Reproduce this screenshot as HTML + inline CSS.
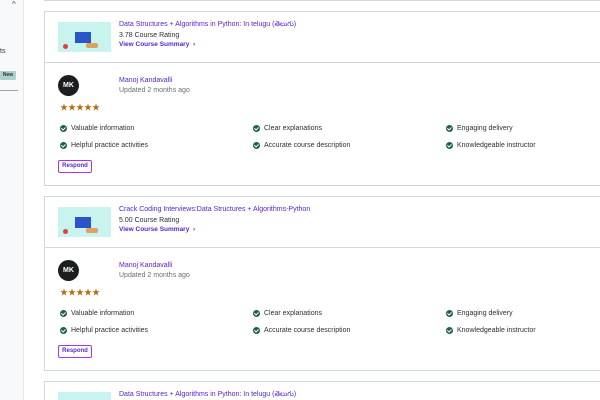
<!DOCTYPE html>
<html style="width:600px;height:400px;overflow:hidden"><head><meta charset="utf-8"><style>
html,body{margin:0;width:600px;height:400px;overflow:hidden}
body{background:#fff;font-family:"Liberation Sans","Noto Sans CJK SC",sans-serif;position:relative;color:#2d2f31}
.side{position:absolute;left:0;top:0;width:23px;height:400px;background:#f7f9fa;border-right:1px solid #e4e6e8}
.card{position:absolute;left:44px;width:570px;height:173px;border:1px solid #d1d7dc;background:#fff}
.hd{height:50px;border-bottom:1px solid #d1d7dc;position:relative}
.th{position:absolute;left:13px;top:10px;width:53px;height:30px;background:#c8f3ee}
.th i{position:absolute;left:17px;top:10px;width:16px;height:11px;background:#2a55c9}
.th b{position:absolute;left:28px;top:21px;width:12px;height:5px;background:#e0a060;border-radius:2px}
.th u{position:absolute;left:5px;top:22px;width:5px;height:5px;background:#e04040;border-radius:50%}
.t{position:absolute;left:74px;font-size:7px;white-space:nowrap}
.ab{position:absolute;font-size:7px;white-space:nowrap}
.av{position:absolute;left:13px;top:63px;width:21px;height:21px;border-radius:50%;background:#1c1d1f;color:#fff;font-size:7px;font-weight:bold;text-align:center;line-height:21px}
.ck{position:absolute;width:7px;height:7px;border-radius:50%;background:#1e6055}
.ck:after{content:"";position:absolute;left:2px;top:1px;width:1.5px;height:3px;border:solid #fff;border-width:0 1px 1px 0;transform:rotate(45deg)}
.btn{position:absolute;left:13px;top:148px;width:32px;height:11px;border:1px solid #a435f0;border-radius:2px;color:#5624d0;font-size:6px;font-weight:bold;text-align:center;line-height:11px}
.st{position:absolute;left:15px;top:90px;color:#b4690e;font-size:8px;letter-spacing:0}
</style></head><body>
<div class="side"></div>
<div style="position:absolute;left:12px;top:0;font-size:8px;color:#555">^</div>
<div style="position:absolute;left:0;top:48px;font-size:7px">ts</div>
<div style="position:absolute;left:0;top:71px;width:16px;height:9px;background:#acd2cc;font-size:5px;font-weight:bold;line-height:9px;text-align:center;border-radius:1px">New</div>
<div style="position:absolute;left:0;top:90px;width:18px;height:1px;background:#9da3a7"></div>
<div style="position:absolute;left:44px;top:0;width:556px;height:1px;background:#d1d7dc"></div>

<div class="card" style="top:11px">
<div class="hd"><div class="th"><i></i><b></b><u></u></div>
<div class="t" style="top:9px;color:#5624d0">Data Structures + Algorithms in Python: In telugu (తెలుగు)</div>
<div class="t" style="top:20px">3.78 Course Rating</div>
<div class="t" style="top:29px;color:#5624d0;font-weight:bold;font-size:6.5px">View Course Summary &nbsp;›</div></div>
<div class="av">MK</div>
<div class="ab" style="left:74px;top:65px;color:#5624d0">Manoj Kandavalli</div>
<div class="ab" style="left:74px;top:75px;color:#6a6f73">Updated 2 months ago</div>
<div class="st">★★★★★</div>
<div class="ck" style="left:15px;top:113px"></div><div class="ab" style="left:26px;top:113px">Valuable information</div>
<div class="ck" style="left:15px;top:130px"></div><div class="ab" style="left:26px;top:130px">Helpful practice activities</div>
<div class="ck" style="left:208px;top:113px"></div><div class="ab" style="left:219px;top:113px">Clear explanations</div>
<div class="ck" style="left:208px;top:130px"></div><div class="ab" style="left:219px;top:130px">Accurate course description</div>
<div class="ck" style="left:401px;top:113px"></div><div class="ab" style="left:412px;top:113px">Engaging delivery</div>
<div class="ck" style="left:401px;top:130px"></div><div class="ab" style="left:412px;top:130px">Knowledgeable instructor</div>
<div class="btn">Respond</div>
</div>

<div class="card" style="top:196px">
<div class="hd"><div class="th"><i></i><b></b><u></u></div>
<div class="t" style="top:9px;color:#5624d0">Crack Coding Interviews:Data Structures + Algorithms-Python</div>
<div class="t" style="top:20px">5.00 Course Rating</div>
<div class="t" style="top:29px;color:#5624d0;font-weight:bold;font-size:6.5px">View Course Summary &nbsp;›</div></div>
<div class="av">MK</div>
<div class="ab" style="left:74px;top:65px;color:#5624d0">Manoj Kandavalli</div>
<div class="ab" style="left:74px;top:75px;color:#6a6f73">Updated 2 months ago</div>
<div class="st">★★★★★</div>
<div class="ck" style="left:15px;top:113px"></div><div class="ab" style="left:26px;top:113px">Valuable information</div>
<div class="ck" style="left:15px;top:130px"></div><div class="ab" style="left:26px;top:130px">Helpful practice activities</div>
<div class="ck" style="left:208px;top:113px"></div><div class="ab" style="left:219px;top:113px">Clear explanations</div>
<div class="ck" style="left:208px;top:130px"></div><div class="ab" style="left:219px;top:130px">Accurate course description</div>
<div class="ck" style="left:401px;top:113px"></div><div class="ab" style="left:412px;top:113px">Engaging delivery</div>
<div class="ck" style="left:401px;top:130px"></div><div class="ab" style="left:412px;top:130px">Knowledgeable instructor</div>
<div class="btn">Respond</div>
</div>

<div class="card" style="top:381px;height:19px;width:555px;border-bottom:none;border-right:none;overflow:hidden">
<div class="th"><i></i></div>
<div class="t" style="top:9px;color:#5624d0">Data Structures + Algorithms in Python: In telugu (తెలుగు)</div>
</div>
</body></html>
